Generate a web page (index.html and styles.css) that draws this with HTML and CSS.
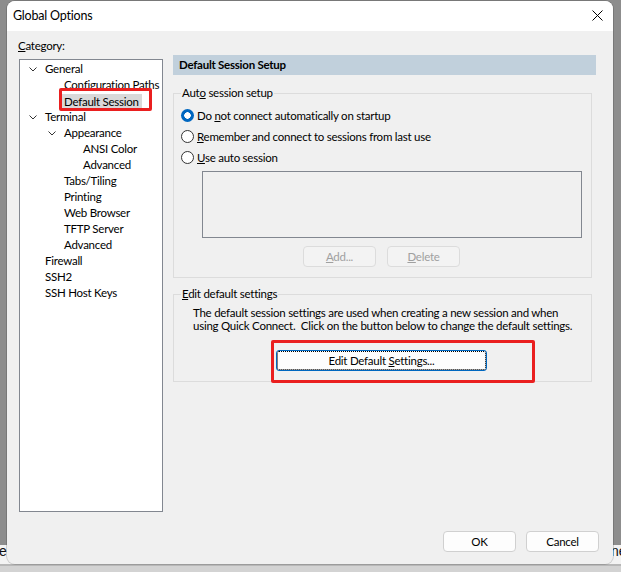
FILE: index.html
```html
<!DOCTYPE html>
<html>
<head>
<meta charset="utf-8">
<title>Global Options</title>
<link rel="stylesheet" href="styles.css">
</head>
<body>
<span class="peek peek-left">e</span>
<span class="peek peek-right">ne</span>
<div class="window">
  <div class="titlebar">
    <span class="title">Global Options</span>
    <svg class="close" width="11" height="11" viewBox="0 0 11 11"><path d="M0.5 0.5 L10.5 10.5 M10.5 0.5 L0.5 10.5" stroke="#000" stroke-width="1" fill="none"/></svg>
  </div>
  <div class="content">
    <div class="main">
      <div class="left">
        <div class="cat-label"><u>C</u>ategory:</div>
        <div class="tree">
          <div class="node l0"><span class="twisty"><svg width="8" height="5" viewBox="0 0 8 5"><path d="M0.5 0.5 L4 4 L7.5 0.5" stroke="#333" fill="none"/></svg></span>General</div>
          <div class="node l1"><span class="twisty"></span>Configuration Paths</div>
          <div class="node l1"><span class="twisty"></span><span class="sel">Default Session</span></div>
          <div class="node l0"><span class="twisty"><svg width="8" height="5" viewBox="0 0 8 5"><path d="M0.5 0.5 L4 4 L7.5 0.5" stroke="#333" fill="none"/></svg></span>Terminal</div>
          <div class="node l1"><span class="twisty"><svg width="8" height="5" viewBox="0 0 8 5"><path d="M0.5 0.5 L4 4 L7.5 0.5" stroke="#333" fill="none"/></svg></span>Appearance</div>
          <div class="node l2"><span class="twisty"></span>ANSI Color</div>
          <div class="node l2"><span class="twisty"></span>Advanced</div>
          <div class="node l1"><span class="twisty"></span>Tabs/Tiling</div>
          <div class="node l1"><span class="twisty"></span>Printing</div>
          <div class="node l1"><span class="twisty"></span>Web Browser</div>
          <div class="node l1"><span class="twisty"></span>TFTP Server</div>
          <div class="node l1"><span class="twisty"></span>Advanced</div>
          <div class="node l0"><span class="twisty"></span>Firewall</div>
          <div class="node l0"><span class="twisty"></span>SSH2</div>
          <div class="node l0"><span class="twisty"></span>SSH Host Keys</div>
        </div>
      </div>
      <div class="right">
        <div class="header">Default Session Setup</div>
        <fieldset class="group g1">
          <legend>Aut<u>o</u> session setup</legend>
          <div class="radio"><span class="dot checked"></span><span>Do <u>n</u>ot connect automatically on startup</span></div>
          <div class="radio"><span class="dot"></span><span><u>R</u>emember and connect to sessions from last use</span></div>
          <div class="radio"><span class="dot"></span><span><u>U</u>se auto session</span></div>
          <div class="listbox"></div>
          <div class="btn-row">
            <button class="btn disabled"><u>A</u>dd...</button>
            <button class="btn disabled"><u>D</u>elete</button>
          </div>
        </fieldset>
        <fieldset class="group g2">
          <legend><u>E</u>dit default settings</legend>
          <p class="desc">The default session settings are used when creating a new session and when<br>using Quick Connect.&nbsp; Click on the button below to change the default settings.</p>
          <div class="edit-wrap">
            <button class="btn focused">Edit Default <u>S</u>ettings...</button>
          </div>
        </fieldset>
      </div>
    </div>
    <div class="footer">
      <button class="btn dlg">OK</button>
      <button class="btn dlg">Cancel</button>
    </div>
  </div>
</div>
</body>
</html>
```

FILE: styles.css
```css
*, *::before, *::after { box-sizing: border-box; }
html, body { margin: 0; padding: 0; }
body {
  width: 621px;
  height: 572px;
  overflow: hidden;
  position: relative;
  font-family: Lato, "Liberation Sans", sans-serif;
  font-size: 11.5px;
  letter-spacing: -0.25px;
  color: #000;
  background: linear-gradient(to bottom, #8d8d8d 0, #8d8d8d 545px, #f3f3f3 545px, #f3f3f3 564px, #b8b8b8 564px, #b8b8b8 566px, #d3d3d3 566px);
}
.peek {
  position: absolute;
  font-family: "Liberation Sans", sans-serif;
  font-size: 14px;
  line-height: 16px;
  letter-spacing: 0;
  color: #111;
}
.peek-left { left: -1px; top: 543px; }
.peek-right { left: 611px; top: 543px; }

.window {
  position: absolute;
  left: 7px;
  top: 1px;
  width: 606px;
  height: 563px;
  background: #f0f0f0;
  border-radius: 8px;
  overflow: hidden;
  box-shadow: 0 0 0 1px rgba(0,0,0,0.15);
  display: flex;
  flex-direction: column;
}
.titlebar {
  height: 30px;
  flex: none;
  background: #fff;
  display: flex;
  align-items: center;
  justify-content: space-between;
  padding: 0 10px 0 6px;
}
.title { font-size: 12.5px; letter-spacing: -0.2px; margin-top: -1px; }
.close { display: block; margin-top: -1px; }

.content {
  flex: 1;
  display: flex;
  flex-direction: column;
}
.main {
  display: flex;
  gap: 10px;
  padding-left: 12px;
}
.left { width: 144px; padding-top: 7px; }
.cat-label { line-height: 16px; margin-left: -1px; margin-bottom: 5px; }
.tree {
  height: 453px;
  background: #fff;
  border: 1px solid #828790;
  padding-top: 1px;
  overflow: hidden;
}
.node {
  height: 16px;
  line-height: 16px;
  white-space: nowrap;
  display: flex;
  align-items: center;
}
.l0 { padding-left: 9px; }
.l1 { padding-left: 28px; }
.l2 { padding-left: 47px; }
.twisty { width: 16px; flex: none; display: flex; align-items: center; }
.twisty svg { display: block; }
.sel {
  position: relative;
  background: #d9d9d9;
  line-height: 15px;
  padding: 0 3px 0 2px;
  margin-left: -2px;
}
.sel::after {
  content: "";
  position: absolute;
  left: -3px;
  top: -6px;
  width: 93px;
  height: 23px;
  border: 3px solid #ea1f1f;
  border-radius: 2px;
}

.right { width: 423px; padding-top: 24px; }
.header {
  height: 20px;
  line-height: 20px;
  background: #c1d0dc;
  font-weight: bold;
  padding-left: 6px;
}
.group {
  margin: 0 4px 0 0;
  border: 1px solid #dcdcdc;
  padding: 5px 9px 10px 7px;
  min-width: 0;
}
.group legend { padding: 0 1px; line-height: 14px; }
.g1 { margin-top: 11px; }
.g2 { margin-top: 9px; }
.radio {
  display: flex;
  align-items: center;
  height: 21px;
  gap: 3px;
}
.dot {
  width: 13px;
  height: 13px;
  border-radius: 50%;
  border: 1px solid #333;
  background: #fff;
  flex: none;
}
.dot.checked {
  border: none;
  background: radial-gradient(circle, #fff 0, #fff 3px, #0067c0 3.5px);
}
.listbox {
  margin: 3px 0 0 21px;
  width: 380px;
  height: 67px;
  border: 1px solid #828790;
  background: #f0f0f0;
}
.btn-row {
  display: flex;
  gap: 11px;
  margin-top: 8px;
  padding-left: 122px;
}
.btn {
  font-family: inherit;
  font-size: 11.5px;
  letter-spacing: -0.25px;
  height: 21px;
  padding: 0;
  border-radius: 4px;
  border: 1px solid #d0d0d0;
  background: #fdfdfd;
  color: #000;
  line-height: 19px;
}
.btn.disabled {
  width: 73px;
  background: #f3f3f3;
  border-color: #dcdcdc;
  color: #a0a0a0;
}
.desc {
  margin: 0 0 0 12px;
  line-height: 13px;
  white-space: nowrap;
}
.edit-wrap {
  position: relative;
  margin: 18px 0 0 95px;
  width: 211px;
}
.edit-wrap::after {
  content: "";
  position: absolute;
  left: -5px;
  top: -10px;
  width: 264px;
  height: 43px;
  border: 3px solid #ea1f1f;
  border-radius: 2px;
}
.btn.focused {
  display: block;
  width: 211px;
  border-color: #0067c0;
  border-radius: 3px;
  outline: 1px dotted #000;
  outline-offset: -2px;
}
.footer {
  margin-top: auto;
  display: flex;
  justify-content: flex-end;
  gap: 10px;
  padding: 0 14px 12px 0;
}
.btn.dlg { width: 73px; }
```
